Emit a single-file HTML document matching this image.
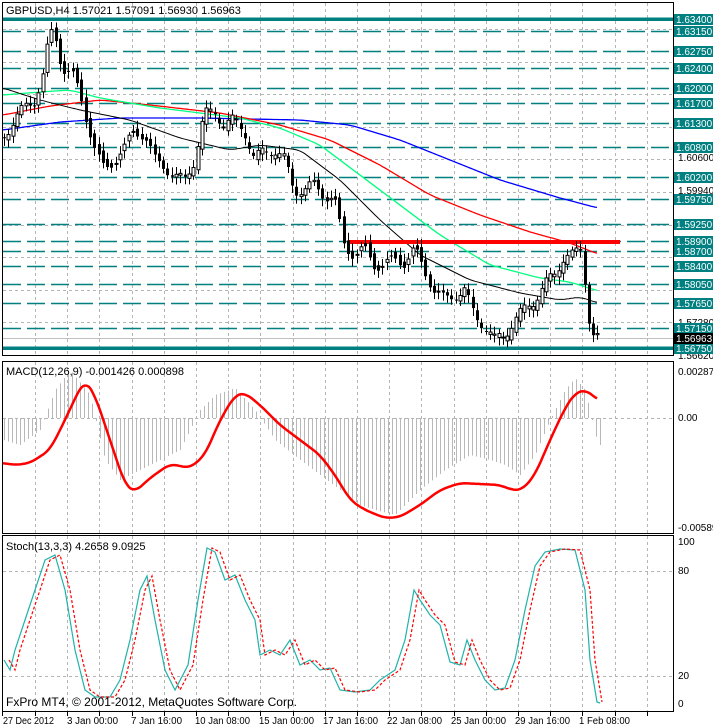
<!DOCTYPE html>
<html><head><meta charset="utf-8"><style>
body{margin:0;background:#fff;width:713px;height:728px;overflow:hidden}
svg{display:block;font-family:"Liberation Sans",sans-serif}
</style></head><body>
<svg id="s" width="713" height="728" xmlns="http://www.w3.org/2000/svg">
<rect width="713" height="728" fill="#fff"/>
<g id="grid" stroke="#b4b4b4" stroke-dasharray="3,3" stroke-width="1"></g>
<g id="lev"></g>
<g id="ma" fill="none"></g>
<g id="cd"></g>
<g id="mc"></g>
<g id="st" fill="none"></g>
<g fill="none" stroke="#000" stroke-width="1">
<rect x="2.5" y="2.5" width="671" height="353"/>
<rect x="2.5" y="361.5" width="671" height="172"/>
<rect x="2.5" y="535.5" width="671" height="176"/>
</g>
<g id="lab" font-size="11"></g>
<text x="6" y="14" font-size="11" fill="#000">GBPUSD,H4  1.57021 1.57091 1.56930 1.56963</text>
<text x="6" y="375" font-size="11">MACD(12,26,9) -0.001426 0.000898</text>
<text x="6" y="550" font-size="11">Stoch(13,3,3) 4.2658 9.0925</text>
<text x="6" y="706" font-size="12">FxPro MT4, © 2001-2012, MetaQuotes Software Corp.</text>
<text x="678" y="375" font-size="10">0.002876</text>
<text x="678" y="421" font-size="10">0.00</text>
<text x="678" y="531" font-size="10">-0.005896</text>
<text x="678" y="545" font-size="10">100</text>
<text x="678" y="574" font-size="10">80</text>
<text x="678" y="679" font-size="10">20</text>
<text x="678" y="707" font-size="10">0</text>
<g id="bt" font-size="10"></g>
</svg>
<script>
var NS="http://www.w3.org/2000/svg";
function el(p,t,a,txt){var e=document.createElementNS(NS,t);for(var k in a)e.setAttribute(k,a[k]);if(txt)e.textContent=txt;document.getElementById(p).appendChild(e);return e;}
function interp(pts,x){for(var i=0;i<pts.length-1;i++){if(x>=pts[i][0]&&x<=pts[i+1][0]){var t=(x-pts[i][0])/(pts[i+1][0]-pts[i][0]);return pts[i][1]+t*(pts[i+1][1]-pts[i][1]);}}return x<pts[0][0]?pts[0][1]:pts[pts.length-1][1];}
function pl(pts){return pts.map(function(p){return p[0]+","+p[1]}).join(" ");}
function smooth(pts){var out=[];for(var x=pts[0][0];x<=pts[pts.length-1][0];x+=2){var s=0,n=0;for(var d=-6;d<=6;d+=2){s+=interp(pts,x+d);n++;}out.push([x,(s/n).toFixed(1)]);}return out;}
for(var x=35;x<672;x+=32.2){var xx=Math.round(x)+.5;[[3,355],[362,533],[536,711]].forEach(function(r){el("grid","line",{x1:xx,y1:r[0],x2:xx,y2:r[1]});});
el("grid","line",{x1:xx,y1:712,x2:xx,y2:716,stroke:"#000","stroke-dasharray":"none"});}
el("grid","line",{x1:2.5,y1:712,x2:2.5,y2:716,stroke:"#000","stroke-dasharray":"none"});
for(var k=0;k<11;k++){var y=Math.round(355-32.6*k)+.5;el("grid","line",{x1:3,y1:y,x2:673,y2:y});}
el("grid","line",{x1:3,y1:418.5,x2:673,y2:418.5});
el("grid","line",{x1:3,y1:571.5,x2:673,y2:571.5});
el("grid","line",{x1:3,y1:676.5,x2:673,y2:676.5});
[["1.60600",157],["1.59940",190],["1.57280",322],["1.56620",355]].forEach(function(l){el("lab","text",{x:678,y:l[1]+4,"font-size":10},l[0]);});
var lv=[["1.63400",19,1],["1.63150",31],["1.62750",51],["1.62400",68],["1.62000",88],["1.61700",103],["1.61300",123],["1.60800",147],["1.60200",177],["1.59750",199],["1.59250",224],["1.58900",241],["1.58700",251],["1.58400",266],["1.58050",284],["1.57650",303],["1.57150",328],["1.56750",348,1]];
lv.forEach(function(l){var y=l[1]+.5;
if(l[2])el("lev","rect",{x:3,y:l[1]-1.5,width:670,height:3.5,fill:"#008080"});
else el("lev","line",{x1:3,y1:y,x2:673,y2:y,stroke:"#008080","stroke-width":1.5,"stroke-dasharray":"18,6"});
el("lab","rect",{x:674,y:l[1]-5,width:39,height:11,fill:"#008080"});
el("lab","text",{x:676,y:l[1]+4,fill:"#fff","font-size":10},l[0]);});
el("lab","rect",{x:674,y:333,width:39,height:11,fill:"#000"});
el("lab","text",{x:676,y:342,fill:"#fff","font-size":10},"1.56963");
el("lev","line",{x1:3,y1:338.5,x2:673,y2:338.5,stroke:"#c0c0c0"});
el("ma","polyline",{points:pl(smooth([[3,130],[60,122],[120,118],[200,118],[300,120],[350,125],[400,140],[450,160],[500,180],[560,198],[598,208]])),stroke:"#0000ff","stroke-width":1.3});
el("ma","polyline",{points:pl(smooth([[3,115],[50,106],[100,100],[150,105],[220,113],[280,125],[330,140],[380,165],[430,195],[480,215],[530,232],[570,243],[598,254]])),stroke:"#ff0000","stroke-width":1.3});
el("ma","polyline",{points:pl(smooth([[3,95],[40,92],[70,90],[100,98],[160,108],[240,118],[280,128],[320,145],[360,175],[400,205],[440,235],[490,265],[540,278],[570,282],[598,291]])),stroke:"#00ff7f","stroke-width":1.3});
el("ma","polyline",{points:pl(smooth([[3,88],[40,100],[80,110],[130,120],[180,138],[230,150],[260,145],[300,150],[340,180],[380,220],[420,255],[470,280],[520,293],[560,300],[580,297],[598,303]])),stroke:"#000","stroke-width":1});
el("ma","rect",{x:348,y:240,width:272,height:4,fill:"#ff0000",stroke:"none"});
var P=[[4,135],[14,120],[24,108],[34,100],[42,80],[50,32],[56,40],[62,68],[72,75],[80,95],[88,125],[96,155],[104,170],[114,160],[124,150],[134,130],[144,135],[154,160],[164,165],[174,178],[184,180],[194,160],[204,115],[214,110],[224,125],[234,120],[244,130],[254,160],[264,150],[274,150],[284,160],[294,190],[304,190],[314,185],[324,195],[334,200],[344,245],[354,255],[364,250],[374,265],[384,265],[394,260],[404,262],[414,250],[424,270],[434,290],[444,300],[454,295],[464,290],[474,315],[484,325],[494,340],[504,335],[514,320],[524,310],[534,300],[544,285],[554,275],[564,255],[574,255],[580,250],[586,290],[590,330],[596,338]];
var prev=interp(P,2);
for(var x=4;x<=598;x+=4.3){var c=interp(P,x)+Math.sin(x*1.7)*6;var o=prev+Math.cos(x*2.9)*4;prev=c;
var hi=Math.min(o,c)-3-Math.abs(Math.sin(x*3.1))*5,lo=Math.max(o,c)+3+Math.abs(Math.cos(x*2.3))*5;
var xx=Math.round(x)+.5;
el("cd","line",{x1:xx,y1:hi,x2:xx,y2:lo,stroke:"#000"});
var h=Math.max(1,Math.abs(c-o));
if(c<o)el("cd","rect",{x:xx-1.5,y:Math.min(o,c),width:3,height:h,fill:"#fff",stroke:"#000","stroke-width":1});
else el("cd","rect",{x:xx-1.5,y:Math.min(o,c),width:3,height:h,fill:"#000"});}
var S=[[3,463],[15,465],[30,463],[50,450],[65,420],[78,392],[85,380],[95,395],[110,440],[125,485],[135,492],[150,478],[170,464],[190,468],[205,455],[220,420],[235,395],[245,393],[260,405],[280,425],[300,440],[320,455],[335,475],[350,500],[365,510],[385,518],[400,517],[420,505],[440,490],[460,483],[480,484],[500,485],[512,490],[522,490],[535,475],[550,440],[565,408],[575,393],[585,390],[592,394],[598,401]];
var M=[[3,440],[20,445],[40,430],[55,390],[70,370],[90,395],[105,460],[120,480],[150,465],[180,450],[200,410],[215,395],[235,388],[255,410],[275,440],[300,460],[320,475],[340,490],[360,505],[375,510],[395,515],[420,490],[445,470],[470,455],[490,460],[505,465],[520,475],[535,455],[550,420],[565,390],[575,378],[585,390],[592,420],[598,445]];
for(var x=4;x<=600;x+=4){var v=interp(M,x);var xx=Math.round(x)+.5;el("mc","line",{x1:xx,y1:418,x2:xx,y2:v,stroke:"#b8b8b8"});}
var Ss=smooth(S);
el("mc","polyline",{points:pl(Ss),fill:"none",stroke:"#ff0000","stroke-width":2.5});
var K=[[4,660],[10,670],[15,650],[25,620],[35,590],[45,560],[55,555],[65,590],[75,650],[85,690],[95,697],[110,697],[120,680],[130,640],[140,590],[147,576],[155,620],[165,670],[175,690],[188,665],[198,600],[207,548],[215,552],[225,580],[235,575],[245,600],[255,620],[260,655],[270,650],[280,655],[290,640],[300,665],[310,660],[320,670],[330,668],[340,690],[355,692],[370,690],[380,680],[395,670],[405,640],[414,590],[420,600],[430,615],[440,625],[450,662],[460,665],[467,640],[475,660],[485,680],[495,690],[505,688],[515,660],[525,610],[535,566],[545,552],[560,549],[575,550],[585,590],[590,660],[597,702],[600,703]];
el("st","polyline",{points:pl(K),stroke:"#20b2aa","stroke-width":1.2});
var D=K.map(function(p){return [p[0]+5,p[1]];});D=D.filter(function(p){return p[0]<=602});
el("st","polyline",{points:pl(D),stroke:"#ff0000","stroke-width":1.2,"stroke-dasharray":"3,2"});
[["27 Dec 2012",2],["3 Jan 00:00",66],["7 Jan 16:00",130],["10 Jan 08:00",194],["15 Jan 00:00",258],["17 Jan 16:00",322],["22 Jan 08:00",386],["25 Jan 00:00",450],["29 Jan 16:00",514],["1 Feb 08:00",578]].forEach(function(l){el("bt","text",{x:l[1]+1,y:724,textLength:(l[0].length*4.6).toFixed(0),lengthAdjust:"spacingAndGlyphs"},l[0]);});
</script>
</body></html>
